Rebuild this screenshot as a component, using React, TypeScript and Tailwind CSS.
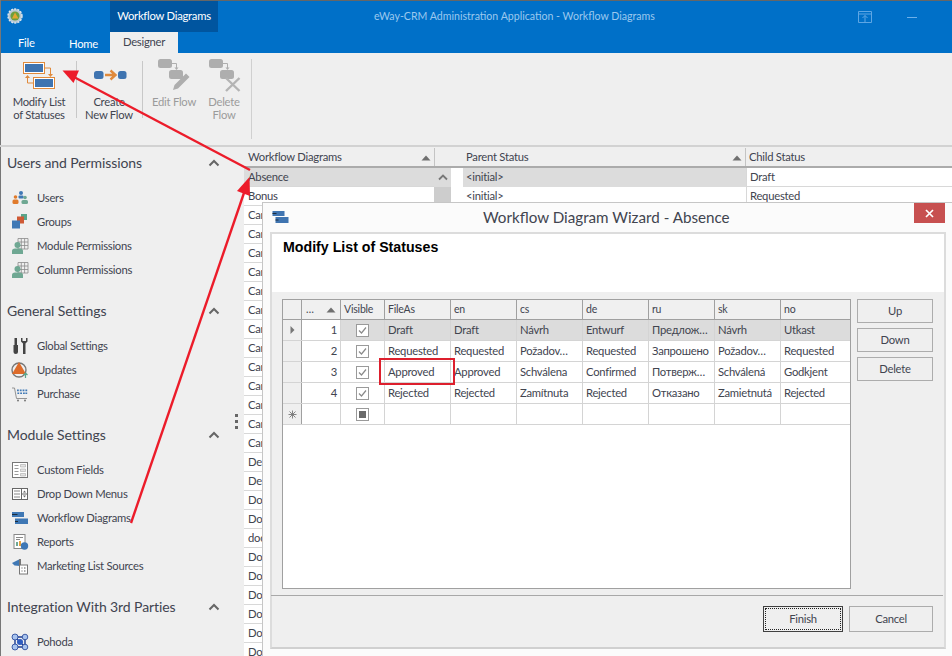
import React from 'react';

const font = { fontFamily: 'Lato, "Noto Sans", "Liberation Sans", "Noto Sans CJK SC", sans-serif' };

const workflowRows = [
  'Absence', 'Bonus', 'Car', 'Car', 'Car', 'Car', 'Car', 'Car', 'Car', 'Car',
  'Car', 'Car', 'Car', 'Car', 'Car', 'Dea', 'Dea', 'Doc', 'Doc', 'doc',
  'Doc', 'Doc', 'Doc', 'Doc', 'Doc', 'Doc',
];

const wizardRows = [
  ['Draft', 'Draft', 'Návrh', 'Entwurf', 'Предлож…', 'Návrh', 'Utkast'],
  ['Requested', 'Requested', 'Požadov…', 'Requested', 'Запрошено', 'Požadov…', 'Requested'],
  ['Approved', 'Approved', 'Schválena', 'Confirmed', 'Потверж…', 'Schválená', 'Godkjent'],
  ['Rejected', 'Rejected', 'Zamítnuta', 'Rejected', 'Отказано', 'Zamietnutá', 'Rejected'],
];

const cols = 'grid grid-cols-[19px_39px_44px_66px_66px_66px_66px_66px_66px_69px]';
const small = 'text-[11.25px] tracking-[-0.25px]';

function Chevron() {
  return (
    <svg width="12" height="8" viewBox="0 0 12 8" className="absolute left-[207px] top-[11px]">
      <path d="M1.5 6.5 L6 2 L10.5 6.5" fill="none" stroke="#666" strokeWidth="2" />
    </svg>
  );
}

function Users() {
  return (
    <svg width="18" height="18" viewBox="0 0 18 18">
      <circle cx="4.5" cy="8" r="1.8" fill="#e07b2c" /><rect x="1.5" y="10.5" width="6" height="4.5" rx="1.5" fill="#e07b2c" />
      <circle cx="10" cy="4" r="2" fill="#3f78b5" /><rect x="7.5" y="6.5" width="5" height="3" rx="1" fill="#3f78b5" />
      <circle cx="14" cy="8.5" r="1.8" fill="#6fa893" /><rect x="10.5" y="11" width="6.5" height="4" rx="1.5" fill="#6fa893" />
    </svg>
  );
}

function Groups() {
  return (
    <svg width="18" height="18" viewBox="0 0 18 18">
      <rect x="10" y="1" width="6" height="6" fill="#5aa58b" />
      <rect x="6" y="3.5" width="7" height="7" fill="#cf5a35" />
      <rect x="1" y="7.5" width="8" height="8" fill="#3f78b5" />
    </svg>
  );
}

function Permissions() {
  return (
    <svg width="18" height="18" viewBox="0 0 18 18">
      <path d="M7 1.5H17V12H7Z M10.3 1.5V12 M13.6 1.5V12 M7 5H17 M7 8.5H17" fill="none" stroke="#8a8a8a" strokeWidth="0.8" />
      <circle cx="6.5" cy="8" r="3" fill="#6fa893" />
      <path d="M1 17 V14 Q1 11.5 4 11.5 H9 Q12 11.5 12 14 V17Z" fill="#6fa893" />
    </svg>
  );
}

function Tools() {
  return (
    <svg width="18" height="18" viewBox="0 0 18 18">
      <rect x="3.5" y="1" width="2.5" height="7" fill="#444" />
      <path d="M2.5 8 H7 V15 Q7 17 4.75 17 Q2.5 17 2.5 15Z" fill="#444" />
      <path d="M10 1 V4.5 L12 6.5 V17 H14.5 V6.5 L16.5 4.5 V1 L15 1 V4 H11.5 V1Z" fill="#444" />
    </svg>
  );
}

function Updates() {
  return (
    <svg width="18" height="18" viewBox="0 0 18 18">
      <circle cx="8" cy="9" r="7" fill="none" stroke="#777" strokeWidth="1.4" />
      <path d="M8 1 L15 13 H1Z" fill="#dd6b2a" />
      <path d="M14.5 17 V12 M12.5 14 L14.5 12 L16.5 14" fill="none" stroke="#5aa58b" strokeWidth="1.2" />
    </svg>
  );
}

function Cart() {
  return (
    <svg width="18" height="18" viewBox="0 0 18 18">
      <path d="M1 3 H3.5 L5.5 13.5 H16" fill="none" stroke="#888" strokeWidth="0.9" />
      <path d="M6 4.5H7.8V6.2H6Z M8.8 4.5H10.6V6.2H8.8Z M11.6 4.5H13.4V6.2H11.6Z M14.4 4.5H16.2V6.2H14.4Z M6.4 7.4H8.2V9.1H6.4Z M9.2 7.4H11V9.1H9.2Z M12 7.4H13.8V9.1H12Z M14.4 7.4H16.2V9.1H14.4Z" fill="#3f78b5" />
      <circle cx="7" cy="15.5" r="1" fill="#777" /><circle cx="14" cy="15.5" r="1" fill="#777" />
    </svg>
  );
}

function Fields() {
  return (
    <svg width="18" height="18" viewBox="0 0 18 18">
      <rect x="1.5" y="1.5" width="15" height="15" fill="#fff" stroke="#777" />
      <path d="M3.5 4.5H7.5 M3.5 7.5H7.5 M3.5 10.5H7.5 M3.5 13.5H7.5" stroke="#999" />
      <path d="M9.5 3.5H14.5V6H9.5Z M9.5 8H14.5V10.5H9.5Z M9.5 12.5H14.5V15H9.5Z" fill="#e4e4e4" stroke="#aaa" strokeWidth="0.6" />
    </svg>
  );
}

function Dropdown() {
  return (
    <svg width="18" height="18" viewBox="0 0 18 18">
      <rect x="1.5" y="3.5" width="15" height="11" fill="#fff" stroke="#666" />
      <path d="M3 6H9 M3 9H9 M3 12H9" stroke="#888" />
      <path d="M10.5 3.5V14.5 M10.5 9H16.5" stroke="#666" />
      <path d="M12 7.5L13.5 5.5L15 7.5Z M12 10.5L13.5 12.5L15 10.5Z" fill="#666" />
    </svg>
  );
}

function FlowBars() {
  return (
    <svg width="18" height="18" viewBox="0 0 18 18">
      <rect x="1" y="3" width="12" height="5" fill="#3f78b5" />
      <rect x="4" y="9.5" width="13" height="5.5" fill="#3f78b5" />
      <rect x="1" y="5" width="5.5" height="1" fill="#1b2b3c" />
      <rect x="4" y="12" width="3" height="1" fill="#1b2b3c" />
    </svg>
  );
}

function Reports() {
  return (
    <svg width="18" height="18" viewBox="0 0 18 18">
      <rect x="3" y="1.5" width="11" height="14" fill="#fff" stroke="#888" />
      <path d="M5 4.5H12 M5 6.5H9" stroke="#888" />
      <rect x="5" y="9" width="2" height="4" fill="#6fa893" /><rect x="8" y="8" width="2" height="5" fill="#e9a13b" />
      <circle cx="13.5" cy="13" r="3.7" fill="#3f78b5" />
    </svg>
  );
}

function Marketing() {
  return (
    <svg width="18" height="18" viewBox="0 0 18 18">
      <path d="M1 6 L9 2 V9 L3.5 8.5Z" fill="#3f78b5" />
      <rect x="8" y="2" width="2" height="8" fill="#777" />
      <rect x="8.5" y="8" width="8" height="9" fill="#fff" stroke="#777" />
      <path d="M10.5 11H11.5 M13 11H14.5 M10.5 14H11.5 M13 14H14.5" stroke="#555" />
    </svg>
  );
}

function Pohoda() {
  return (
    <svg width="18" height="18" viewBox="0 0 18 18">
      <path d="M4 4 L14 4 L14 14 L4 14Z M4 4 L14 14" fill="none" stroke="#1f3f94" strokeWidth="1.4" />
      <circle cx="4" cy="4" r="3" fill="#a8c4ee" stroke="#1f3f94" strokeWidth="0.8" />
      <circle cx="14" cy="4" r="2.8" fill="#a8c4ee" stroke="#1f3f94" strokeWidth="0.8" />
      <circle cx="9" cy="9" r="3" fill="#2f5cc0" />
      <circle cx="4" cy="14" r="3" fill="#a8c4ee" stroke="#1f3f94" strokeWidth="0.8" />
      <circle cx="14" cy="14" r="2.8" fill="#a8c4ee" stroke="#1f3f94" strokeWidth="0.8" />
    </svg>
  );
}

const sections = [
  {
    title: 'Users and Permissions',
    items: [
      { label: 'Users', icon: <Users /> },
      { label: 'Groups', icon: <Groups /> },
      { label: 'Module Permissions', icon: <Permissions /> },
      { label: 'Column Permissions', icon: <Permissions /> },
    ],
  },
  {
    title: 'General Settings',
    items: [
      { label: 'Global Settings', icon: <Tools /> },
      { label: 'Updates', icon: <Updates /> },
      { label: 'Purchase', icon: <Cart /> },
    ],
  },
  {
    title: 'Module Settings',
    items: [
      { label: 'Custom Fields', icon: <Fields /> },
      { label: 'Drop Down Menus', icon: <Dropdown /> },
      { label: 'Workflow Diagrams', icon: <FlowBars /> },
      { label: 'Reports', icon: <Reports /> },
      { label: 'Marketing List Sources', icon: <Marketing /> },
    ],
  },
  {
    title: 'Integration With 3rd Parties',
    items: [{ label: 'Pohoda', icon: <Pohoda /> }],
  },
];

function Logo() {
  return (
    <svg width="16" height="16" viewBox="0 0 16 16" className="absolute left-[7px] top-[7px]">
      <circle cx="8" cy="8" r="7" fill="#b8c8d4" stroke="#dfe7ec" strokeWidth="1.4" strokeDasharray="2 1.2" />
      <circle cx="8" cy="8" r="4.6" fill="#6d9e3c" />
      <path d="M8 4.5 L11.5 10.5 H5Z" fill="#e3a62f" />
    </svg>
  );
}

function RibbonIcons() {
  return (
    <svg width="252" height="92" viewBox="0 0 252 92" className="absolute left-0 top-[53px]">
      {/* Modify list */}
      <rect x="23.5" y="9.5" width="21" height="11" fill="#fff" stroke="#e08a3c" />
      <rect x="25" y="11" width="18" height="8" fill="#3f74b0" />
      <rect x="33.5" y="24.5" width="21" height="11" fill="#fff" stroke="#e08a3c" />
      <rect x="35" y="26" width="18" height="8" fill="#3f74b0" />
      <path d="M45 15 H50.5 V22" fill="none" stroke="#e08a3c" />
      <path d="M48 21 L50.5 24 L53 21Z" fill="#e08a3c" />
      <path d="M33 30 H27.5 V24" fill="none" stroke="#e08a3c" />
      <path d="M25 25 L27.5 22 L30 25Z" fill="#e08a3c" />
      {/* Create */}
      <rect x="94" y="18" width="9.500" height="8" rx="2.500" fill="#3f74b0" />
      <rect x="118" y="18" width="8.500" height="8" rx="2.500" fill="#3f74b0" />
      <path d="M105 22 H114 M110.500 17.500 L115.500 22 L110.500 26.500" fill="none" stroke="#e08a3c" strokeWidth="2.400" />
      {/* Edit */}
      <rect x="158" y="6" width="14" height="9" rx="2.500" fill="#aeaeae" />
      <rect x="169" y="17" width="14" height="9" rx="2.500" fill="#aeaeae" />
      <path d="M172 10.500 H176.500 V16" fill="none" stroke="#aeaeae" />
      <path d="M174.500 14.500 L176.500 17 L178.500 14.500Z" fill="#aeaeae" />
      <path d="M173 37 L174.500 32 L186 20.500 L189.500 24 L178 35.500Z" fill="#aeaeae" />
      {/* Delete */}
      <rect x="209" y="6" width="14" height="9" rx="2.500" fill="#aeaeae" />
      <rect x="220" y="17" width="14" height="9" rx="2.500" fill="#aeaeae" />
      <path d="M223 10.500 H227.500 V16" fill="none" stroke="#aeaeae" />
      <path d="M225.500 14.500 L227.500 17 L229.500 14.500Z" fill="#aeaeae" />
      <path d="M226 25 L239.500 38 M239.500 25 L226 38" stroke="#b4b4b4" strokeWidth="2.400" />
    </svg>
  );
}

function RibbonLabel({ left, width, lines, muted }: { left: number; width: number; lines: string[]; muted?: boolean }) {
  return (
    <div
      className={`absolute top-[95px] text-center leading-[13px] ${small} ${muted ? 'text-[#9b9b9b]' : 'text-[#41444f]'}`}
      style={{ left, width }}
    >
      {lines.map((l) => (
        <div key={l}>{l}</div>
      ))}
    </div>
  );
}

function Check({ filled }: { filled?: boolean }) {
  return (
    <svg width="13" height="13" viewBox="0 0 13 13">
      <rect x="0.5" y="0.5" width="12" height="12" fill="#fff" stroke="#9a9a9a" />
      {filled ? (
        <rect x="3" y="3" width="7" height="7" fill="#6a6a6a" />
      ) : (
        <path d="M3 6.500 L5.500 9 L10 3.500" fill="none" stroke="#8a8a8a" strokeWidth="1.200" />
      )}
    </svg>
  );
}

function SortUp({ className }: { className: string }) {
  return (
    <svg width="10" height="6" viewBox="0 0 10 6" className={className}>
      <path d="M5 0.500 L9.500 5.500 H0.500Z" fill="#707070" />
    </svg>
  );
}

function Wizard() {
  const cell = 'flex items-center overflow-hidden whitespace-nowrap border-r border-[#d4d4d4] pl-[3px]';
  return (
    <div className="absolute left-[262px] top-[202px] h-[454px] w-[690px] border-l border-t border-[#c6c6c6] bg-[#fbfbfb]">
      <svg width="18" height="14" viewBox="0 0 18 14" className="absolute left-[9px] top-[8px]">
        <rect x="0.500" y="0" width="12" height="5" fill="#3f74b0" />
        <rect x="3.500" y="6" width="13" height="6" fill="#3f74b0" />
        <rect x="0.500" y="2" width="4" height="1" fill="#1b2b3c" />
        <rect x="3.500" y="8.500" width="3" height="1" fill="#1b2b3c" />
      </svg>
      <div className="absolute left-[220px] top-[2px] text-[15.2px] leading-[24px] text-[#41444f]">
        Workflow Diagram Wizard - Absence
      </div>
      <div className="absolute left-[651px] top-0 flex h-[20px] w-[31px] items-center justify-center bg-[#c75050]">
        <svg width="9" height="9" viewBox="0 0 9 9">
          <path d="M1 1 L8 8 M8 1 L1 8" stroke="#fff" strokeWidth="1.700" />
        </svg>
      </div>

      {/* inner panel */}
      <div className="absolute left-[7px] top-[29px] h-[417px] w-[676px] border-2 border-[#dcdcdc] border-b-[#d0d0d0] bg-[#efefef]">
        <div className="h-[58px] bg-white pl-[11px] pt-[3px]">
          <div
            className="text-[14.2px] font-bold leading-[20px] text-black"
            style={{ fontFamily: '"Liberation Sans", Arial, sans-serif' }}
          >
            Modify List of Statuses
          </div>
        </div>
      </div>

      {/* grid */}
      <div className={`absolute left-[19px] top-[96px] h-[290px] w-[569px] border border-[#a0a0a0] bg-white text-[#41444f] ${small}`}>
        <div className={`${cols} h-[20px] border-b border-[#a0a0a0] bg-[#f0f0f0] text-[10.5px] tracking-[-0.2px]`}>
          <div className="border-r border-[#a0a0a0]" />
          <div className="relative flex items-center border-r border-[#a0a0a0] pl-[4px]">
            …
            <SortUp className="absolute left-[24px] top-[7px]" />
          </div>
          {['Visible', 'FileAs', 'en', 'cs', 'de', 'ru', 'sk', 'no'].map((h, i) => (
            <div
              key={h}
              className={`flex items-center pl-[3px] ${i < 7 ? 'border-r border-[#a0a0a0]' : ''}`}
            >
              {h}
            </div>
          ))}
        </div>
        {wizardRows.map((row, r) => (
          <div key={r} className={`${cols} h-[21px] border-b border-[#d4d4d4]`}>
            <div className="flex items-center justify-center border-r border-[#a0a0a0] bg-[#efefef]">
              {r === 0 && (
                <svg width="5" height="8" viewBox="0 0 5 8">
                  <path d="M0.500 0 L4.500 4 L0.500 8Z" fill="#777" />
                </svg>
              )}
            </div>
            <div className="flex items-center justify-end border-r border-[#d4d4d4] pr-[3px]">{r + 1}</div>
            <div
              className={`flex items-center justify-center border-r border-[#d4d4d4] ${r === 0 ? 'bg-[#dcdcdc]' : ''}`}
            >
              <Check />
            </div>
            {row.map((v, c) => (
              <div key={c} className={`${cell} ${r === 0 ? 'bg-[#dcdcdc]' : ''} ${c === 6 ? 'border-r-0' : ''}`}>
                {v}
              </div>
            ))}
          </div>
        ))}
        <div className={`${cols} h-[21px] border-b border-[#d4d4d4]`}>
          <div className="flex items-center justify-center border-r border-[#a0a0a0] bg-[#efefef]">
            <svg width="9" height="9" viewBox="0 0 9 9">
              <path d="M4.500 0.500V8.500 M0.500 4.500H8.500 M1.500 1.500L7.500 7.500 M7.500 1.500L1.500 7.500" stroke="#777" strokeWidth="0.900" />
            </svg>
          </div>
          <div className="border-r border-[#d4d4d4]" />
          <div className="flex items-center justify-center border-r border-[#d4d4d4]">
            <Check filled />
          </div>
          {[0, 1, 2, 3, 4, 5, 6].map((c) => (
            <div key={c} className={c === 6 ? '' : 'border-r border-[#d4d4d4]'} />
          ))}
        </div>
      </div>

      {/* red highlight around Approved */}
      <div className="absolute left-[116px] top-[155px] h-[27px] w-[76px] border-2 border-[#dd1f2d]" />

      {/* side buttons */}
      <div className={`absolute left-[594px] top-[96px] flex w-[76px] flex-col gap-[5px] text-[#41444f] ${small}`}>
        {['Up', 'Down', 'Delete'].map((b) => (
          <div key={b} className="flex h-[24px] items-center justify-center border border-[#acacac] bg-[#efefef]">
            {b}
          </div>
        ))}
      </div>

      <div className="absolute left-[8px] top-[392px] h-px w-[672px] bg-[#a8a8a8]" />

      <div className={`absolute left-[500px] top-[403px] flex h-[26px] w-[80px] items-center justify-center border border-[#404040] bg-[#efefef] text-[#41444f] ${small}`}>
        <div className="absolute inset-[1px] border border-dotted border-[#222]" />
        Finish
      </div>
      <div className={`absolute left-[586px] top-[403px] flex h-[26px] w-[84px] items-center justify-center border border-[#acacac] bg-[#efefef] text-[#41444f] ${small}`}>
        Cancel
      </div>
    </div>
  );
}

export default function App() {
  return (
    <div className="relative h-[656px] w-[952px] overflow-hidden bg-[#efefef] text-[#41444f]" style={font}>
      {/* title bar */}
      <div className="absolute left-0 top-0 h-[53px] w-full border-t border-[#666] bg-[#0070c8]">
        <Logo />
        <div className={`absolute left-[110px] top-0 flex h-[31px] w-[108px] items-center justify-center bg-[#00559f] text-white ${small}`}>
          Workflow Diagrams
        </div>
        <div className="absolute left-[374px] top-[8px] text-[10.6px] leading-[15px] text-[#9cc8ee]">
          eWay-CRM Administration Application - Workflow Diagrams
        </div>
        <svg width="14" height="12" viewBox="0 0 14 12" className="absolute left-[858px] top-[10px]">
          <path d="M0.500 0.500H13.500V11.500H0.500Z M0.500 3H13.500" fill="none" stroke="#5ea6e4" />
          <path d="M7 11V4.500 M4.500 7L7 4.500L9.500 7" fill="none" stroke="#5ea6e4" />
        </svg>
        <div className="absolute left-[907px] top-[16px] h-px w-[10px] bg-[#6db0ea]" />
        <div className={`absolute left-[18px] top-[33px] leading-[18px] text-white ${small}`}>File</div>
        <div className={`absolute left-[69px] top-[34px] leading-[18px] text-white ${small}`}>Home</div>
        <div className={`absolute left-[110px] top-[31px] flex h-[21px] w-[68px] items-center justify-center bg-[#efefef] ${small}`}>
          Designer
        </div>
      </div>
      <div className="absolute left-0 top-0 h-full w-px bg-[#777]" />

      {/* ribbon */}
      <RibbonIcons />
      <RibbonLabel left={2} width={74} lines={['Modify List', 'of Statuses']} />
      <RibbonLabel left={78} width={62} lines={['Create', 'New Flow']} />
      <RibbonLabel left={144} width={60} lines={['Edit Flow']} muted />
      <RibbonLabel left={200} width={48} lines={['Delete', 'Flow']} muted />
      <div className="absolute left-[76px] top-[61px] h-[57px] w-px bg-[#c8c8c8]" />
      <div className="absolute left-[142px] top-[61px] h-[57px] w-px bg-[#c8c8c8]" />
      <div className="absolute left-[251px] top-[59px] h-[80px] w-px bg-[#d0d0d0]" />
      <div className="absolute left-0 top-[145px] h-[2px] w-full bg-[#d2d2d2]" />

      {/* left navigation */}
      <div className="absolute left-px top-[148px] w-[235px]">
        {sections.map((s) => (
          <div key={s.title} className="mb-[14px]">
            <div className="relative mb-[8px] h-[30px] pl-[6px] text-[14px] leading-[30px] tracking-[-0.1px] text-[#41444f]">
              {s.title}
              <Chevron />
            </div>
            {s.items.map((it) => (
              <div key={it.label} className={`flex h-[24px] items-center pl-[10px] text-[#41444f] ${small}`}>
                <span className="flex w-[26px] shrink-0 items-center">{it.icon}</span>
                {it.label}
              </div>
            ))}
          </div>
        ))}
      </div>
      <div className="absolute left-[235px] top-[414px] flex flex-col gap-[3px]">
        <div className="h-[3px] w-[3px] bg-[#666]" />
        <div className="h-[3px] w-[3px] bg-[#666]" />
        <div className="h-[3px] w-[3px] bg-[#666]" />
      </div>

      {/* workflow list */}
      <div className={`absolute left-[244px] top-[147px] h-[509px] w-[708px] bg-white ${small}`}>
        <div className="flex h-[21px] border-b-2 border-[#ababab] bg-[#efefef] pt-px">
          <div className="relative flex w-[191px] items-center border-r border-[#c4c4c4] pl-[4px]">
            Workflow Diagrams
            <SortUp className="absolute left-[177px] top-[7px]" />
          </div>
          <div className="w-[28px]" />
          <div className="relative flex w-[283px] items-center border-r border-[#c4c4c4] pl-[3px]">
            Parent Status
            <SortUp className="absolute left-[269px] top-[7px]" />
          </div>
          <div className="flex flex-1 items-center pl-[3px]">Child Status</div>
        </div>
        <div className="absolute left-0 top-[21px] w-[190px]">
          {workflowRows.map((r, i) => (
            <div
              key={i}
              className={`flex h-[19px] items-center whitespace-nowrap border-b border-[#d8d8d8] pl-[4px] ${i === 0 ? 'bg-[#dcdcdc]' : ''}`}
            >
              {r}
            </div>
          ))}
        </div>
        <div className="absolute left-[190px] top-[21px] h-[488px] w-[17px] bg-[#cdcdcd]">
          <div className="flex h-[19px] items-center justify-center bg-[#dcdcdc]">
            <svg width="10" height="7" viewBox="0 0 10 7">
              <path d="M1 5.500 L5 1.500 L9 5.500" fill="none" stroke="#777" strokeWidth="1.800" />
            </svg>
          </div>
        </div>
        <div className="absolute left-[219px] top-[21px] w-[283px]">
          <div className="flex h-[19px] items-center bg-[#dcdcdc] pl-[3px]">&lt;initial&gt;</div>
          <div className="flex h-[19px] items-center border-b border-[#d8d8d8] pl-[3px]">&lt;initial&gt;</div>
        </div>
        <div className="absolute left-[502px] top-[21px] w-[206px]">
          <div className="flex h-[19px] items-center border-b border-l border-[#d8d8d8] pl-[3px]">Draft</div>
          <div className="flex h-[19px] items-center border-b border-l border-[#d8d8d8] pl-[3px]">Requested</div>
        </div>
      </div>

      <Wizard />

      {/* red callout arrows */}
      <svg width="952" height="656" viewBox="0 0 952 656" className="pointer-events-none absolute left-0 top-0">
        <path d="M72 76 L250 170" fill="none" stroke="#ec1c2a" strokeWidth="2.400" />
        <path d="M62.500 70.500 L79 70.500 L73.500 83Z" fill="#ec1c2a" />
        <path d="M131 523 L245 190" fill="none" stroke="#ec1c2a" strokeWidth="2.400" />
        <path d="M249.500 177 L237 191 L250 196Z" fill="#ec1c2a" />
      </svg>
    </div>
  );
}
